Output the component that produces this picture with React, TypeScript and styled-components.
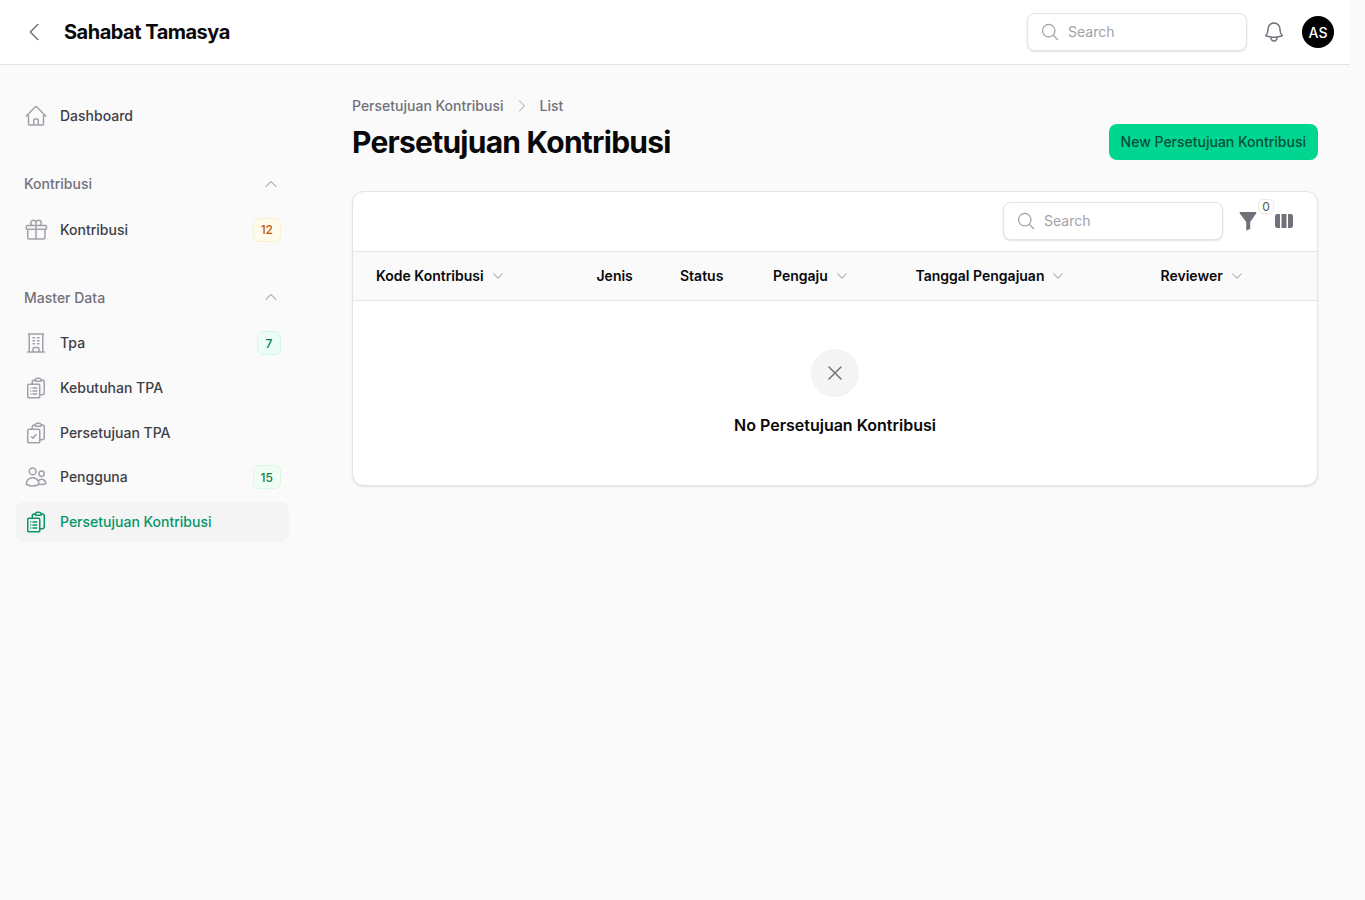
import React from "react";
import styled, { createGlobalStyle } from "styled-components";
import {
  HiChevronDown,
  HiChevronUp,
  HiMiniViewColumns,
  HiOutlineBell,
  HiOutlineBuildingOffice,
  HiOutlineChevronLeft,
  HiOutlineChevronRight,
  HiOutlineClipboardDocumentCheck,
  HiOutlineClipboardDocumentList,
  HiOutlineGift,
  HiOutlineHome,
  HiOutlineMagnifyingGlass,
  HiOutlineUsers,
  HiOutlineXMark,
} from "react-icons/hi2";

type Tone = "amber" | "teal" | "green";

const badgeTones: Record<Tone, { bg: string; border: string; color: string }> = {
  amber: { bg: "#fffbeb", border: "#fdf0d0", color: "#c2570c" },
  teal: { bg: "#ecfdf5", border: "#d5f7e6", color: "#047857" },
  green: { bg: "#f0fdf4", border: "#dcf8e5", color: "#15803d" },
};

const columns = [
  { label: "Kode Kontribusi", sortable: true },
  { label: "Jenis", sortable: false },
  { label: "Status", sortable: false },
  { label: "Pengaju", sortable: true },
  { label: "Tanggal Pengajuan", sortable: true },
  { label: "Reviewer", sortable: true },
];

function FunnelIcon() {
  return (
    <svg width="20" height="20" viewBox="0 0 20 20" fill="currentColor">
      <path d="M2.5 1h15c.7 0 1.1.6.8 1.2L12.2 11v7l-4 1.5V11L1.7 2.2C1.4 1.6 1.8 1 2.5 1z" />
    </svg>
  );
}

export default function App() {
  return (
    <Page>
      <GlobalStyle />
      <TopBar>
        <BackButton>
          <HiOutlineChevronLeft size={24} />
        </BackButton>
        <Brand>Sahabat Tamasya</Brand>
        <TopBarRight>
          <SearchBox>
            <HiOutlineMagnifyingGlass size={20} />
            <SearchText>Search</SearchText>
          </SearchBox>
          <BellButton>
            <HiOutlineBell size={24} />
          </BellButton>
          <Avatar>AS</Avatar>
        </TopBarRight>
      </TopBar>
      <Body>
        <Sidebar>
          <NavItem>
            <HiOutlineHome size={24} />
            <NavLabel>Dashboard</NavLabel>
          </NavItem>

          <GroupHeader>
            <span>Kontribusi</span>
            <HiChevronUp size={16} />
          </GroupHeader>
          <NavItem>
            <HiOutlineGift size={24} />
            <NavLabel>Kontribusi</NavLabel>
            <Badge $tone="amber">12</Badge>
          </NavItem>

          <GroupHeader>
            <span>Master Data</span>
            <HiChevronUp size={16} />
          </GroupHeader>
          <NavItem>
            <HiOutlineBuildingOffice size={24} />
            <NavLabel>Tpa</NavLabel>
            <Badge $tone="teal">7</Badge>
          </NavItem>
          <NavItem>
            <HiOutlineClipboardDocumentList size={24} />
            <NavLabel>Kebutuhan TPA</NavLabel>
          </NavItem>
          <NavItem>
            <HiOutlineClipboardDocumentCheck size={24} />
            <NavLabel>Persetujuan TPA</NavLabel>
          </NavItem>
          <NavItem>
            <HiOutlineUsers size={24} />
            <NavLabel>Pengguna</NavLabel>
            <Badge $tone="green">15</Badge>
          </NavItem>
          <NavItem $active>
            <HiOutlineClipboardDocumentList size={24} />
            <NavLabel>Persetujuan Kontribusi</NavLabel>
          </NavItem>
        </Sidebar>

        <Main>
          <Breadcrumbs>
            <span>Persetujuan Kontribusi</span>
            <HiOutlineChevronRight size={16} />
            <span>List</span>
          </Breadcrumbs>
          <Heading>
            <Title>Persetujuan Kontribusi</Title>
            <PrimaryButton>New Persetujuan Kontribusi</PrimaryButton>
          </Heading>

          <Card>
            <Toolbar>
              <SearchBox>
                <HiOutlineMagnifyingGlass size={20} />
                <SearchText>Search</SearchText>
              </SearchBox>
              <ToolIcons>
                <FilterButton>
                  <FunnelIcon />
                  <CountBadge>0</CountBadge>
                </FilterButton>
                <HiMiniViewColumns size={20} />
              </ToolIcons>
            </Toolbar>
            <HeaderRow>
              {columns.map((col) => (
                <HeaderCell key={col.label}>
                  {col.label}
                  {col.sortable && <HiChevronDown size={14} />}
                </HeaderCell>
              ))}
            </HeaderRow>
            <Empty>
              <EmptyCircle>
                <HiOutlineXMark size={24} />
              </EmptyCircle>
              <EmptyTitle>No Persetujuan Kontribusi</EmptyTitle>
            </Empty>
          </Card>
        </Main>
      </Body>
    </Page>
  );
}

const GlobalStyle = createGlobalStyle`
  html, body {
    margin: 0;
    padding: 0;
    background: #fafafa;
  }
  body {
    font-family: Inter, "Liberation Sans", sans-serif;
    color: #09090b;
  }
  * {
    box-sizing: border-box;
  }
`;

const Page = styled.div`
  width: 1350px;
  min-height: 900px;
  background: #fafafa;
`;

const TopBar = styled.header`
  display: flex;
  align-items: center;
  height: 65px;
  padding: 0 16px 0 22px;
  background: #fff;
  border-bottom: 1px solid #e4e4e7;
`;

const BackButton = styled.div`
  display: flex;
  width: 24px;
  margin-right: 18px;
  color: #71717a;
`;

const Brand = styled.div`
  font-size: 20px;
  line-height: 28px;
  font-weight: 700;
  letter-spacing: -0.5px;
  color: #09090b;
`;

const TopBarRight = styled.div`
  display: flex;
  align-items: center;
  margin-left: auto;
`;

const SearchBox = styled.div`
  display: flex;
  align-items: center;
  gap: 8px;
  width: 220px;
  height: 38px;
  padding: 0 12px;
  background: #fff;
  border: 1px solid #e4e4e7;
  border-radius: 8px;
  box-shadow: 0 1px 2px rgba(0, 0, 0, 0.12);
  color: #a1a1aa;

  svg {
    flex: none;
    color: #a1a1aa;
  }
`;

const SearchText = styled.span`
  font-size: 14px;
  line-height: 20px;
  color: #a1a1aa;
`;

const BellButton = styled.div`
  display: flex;
  margin: 0 16px 0 15px;
  color: #71717a;
`;

const Avatar = styled.div`
  display: flex;
  align-items: center;
  justify-content: center;
  width: 32px;
  height: 32px;
  border-radius: 50%;
  background: #000;
  color: #fff;
  font-size: 14px;
  font-weight: 500;
`;

const Body = styled.div`
  display: flex;
  align-items: flex-start;
`;

const Sidebar = styled.nav`
  flex: none;
  width: 320px;
  padding: 31px 31px 0 16px;
`;

const NavItem = styled.div<{ $active?: boolean }>`
  display: flex;
  align-items: center;
  gap: 12px;
  height: 40.67px;
  margin-bottom: 4px;
  padding: 0 8px;
  border-radius: 8px;
  background: ${(p) => (p.$active ? "#f4f4f5" : "transparent")};
  color: ${(p) => (p.$active ? "#059669" : "#3f3f46")};

  svg {
    flex: none;
    color: ${(p) => (p.$active ? "#059669" : "#a1a1aa")};
  }
`;

const NavLabel = styled.span`
  flex: 1;
  font-size: 14px;
  line-height: 20px;
  font-weight: 500;
`;

const Badge = styled.span<{ $tone: Tone }>`
  display: flex;
  align-items: center;
  justify-content: center;
  min-width: 24px;
  height: 24px;
  padding: 0 7px;
  border-radius: 6px;
  font-size: 12px;
  font-weight: 500;
  background: ${(p) => badgeTones[p.$tone].bg};
  border: 1px solid ${(p) => badgeTones[p.$tone].border};
  color: ${(p) => badgeTones[p.$tone].color};
`;

const GroupHeader = styled.div`
  display: flex;
  align-items: center;
  justify-content: space-between;
  height: 20px;
  margin: 37.8px 0 15px;
  padding: 0 10px 0 8px;
  font-size: 14px;
  line-height: 20px;
  font-weight: 500;
  color: #71717a;

  svg {
    margin-top: -1px;
    color: #a1a1aa;
  }
`;

const Main = styled.main`
  flex: 1;
  min-width: 0;
  padding: 31px 32px 0;
`;

const Breadcrumbs = styled.div`
  display: flex;
  align-items: center;
  gap: 10px;
  height: 20px;
  font-size: 14px;
  line-height: 20px;
  font-weight: 500;
  color: #71717a;

  svg {
    color: #a1a1aa;
  }
`;

const Heading = styled.div`
  display: flex;
  align-items: center;
  justify-content: space-between;
  margin: 0 0 31px;
  padding-top: 8px;
`;

const Title = styled.h1`
  margin: 0;
  font-size: 30px;
  line-height: 36px;
  font-weight: 700;
  letter-spacing: -0.75px;
  color: #09090b;
`;

const PrimaryButton = styled.button`
  height: 36px;
  padding: 0 12px 2px;
  border: 0;
  border-radius: 8px;
  background: #00d68f;
  color: #064e3b;
  font-family: inherit;
  font-size: 14px;
  font-weight: 500;
`;

const Card = styled.section`
  background: #fff;
  border: 1px solid #e4e4e7;
  border-radius: 12px;
  box-shadow: 0 1px 2px rgba(0, 0, 0, 0.1);
  overflow: hidden;
`;

const Toolbar = styled.div`
  display: flex;
  align-items: center;
  justify-content: flex-end;
  gap: 15px;
  height: 59px;
  padding: 0 23px 1px 24px;
`;

const ToolIcons = styled.div`
  display: flex;
  align-items: center;
  gap: 16px;
  color: #71717a;
`;

const FilterButton = styled.div`
  position: relative;
  display: flex;
`;

const CountBadge = styled.span`
  position: absolute;
  top: -12px;
  left: 20px;
  display: flex;
  align-items: center;
  justify-content: center;
  width: 16px;
  height: 15px;
  background: #fff;
  border: 1px solid #e9e9eb;
  border-radius: 5px;
  font-size: 12px;
  line-height: 1;
  color: #52525b;
`;

const HeaderRow = styled.div`
  display: grid;
  grid-template-columns: 220.5px 83.5px 93px 142.5px 245px 1fr;
  align-items: center;
  height: 50px;
  padding-left: 23px;
  background: #fafafa;
  border-top: 1px solid #e4e4e7;
  border-bottom: 1px solid #e4e4e7;
`;

const HeaderCell = styled.div`
  display: flex;
  align-items: center;
  gap: 7px;
  font-size: 14px;
  line-height: 20px;
  font-weight: 600;
  color: #09090b;

  svg {
    color: #a1a1aa;
  }
`;

const Empty = styled.div`
  display: flex;
  flex-direction: column;
  align-items: center;
  height: 184px;
  padding-top: 48px;
`;

const EmptyCircle = styled.div`
  display: flex;
  align-items: center;
  justify-content: center;
  width: 48px;
  height: 48px;
  border-radius: 50%;
  background: #f4f4f5;
  color: #71717a;
`;

const EmptyTitle = styled.div`
  margin-top: 16px;
  font-size: 16px;
  line-height: 24px;
  font-weight: 600;
  color: #09090b;
`;
